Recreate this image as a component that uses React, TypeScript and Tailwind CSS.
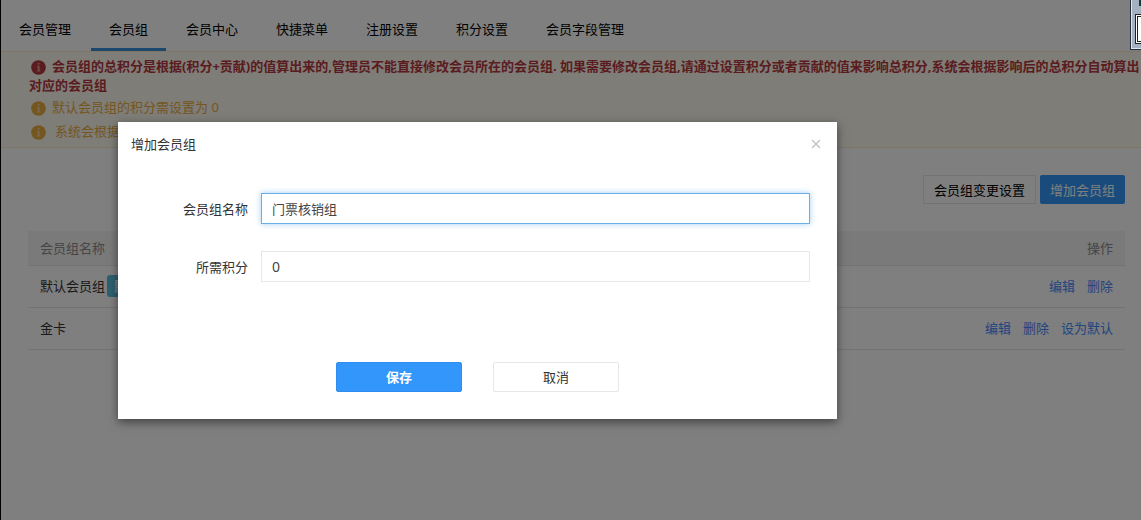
import { useEffect, useRef, useState } from "react";
import type { ReactNode } from "react";

const TABS = ["会员管理", "会员组", "会员中心", "快捷菜单", "注册设置", "积分设置", "会员字段管理"];

interface Group {
  name: string;
  isDefault?: boolean;
  actions: string[];
}

const GROUPS: Group[] = [
  { name: "默认会员组", isDefault: true, actions: ["编辑", "删除"] },
  { name: "金卡", actions: ["编辑", "删除", "设为默认"] },
];

function InfoIcon({ className }: { className: string }) {
  return (
    <svg viewBox="0 0 15 15" className={`inline-block size-[15px] shrink-0 ${className}`} aria-hidden="true">
      <circle cx="7.5" cy="7.5" r="7.3" fill="currentColor" />
      <path d="M6.7 3h1.9v1.6H6.7zM6 5.8h2.6v4.6h.9v1.2H5.8v-1.2h.9V7H6z" fill="#fffaf0" fillOpacity="0.5" />
    </svg>
  );
}

function Field({ id, label, children }: { id: string; label: string; children: ReactNode }) {
  return (
    <div className="flex items-center">
      <label htmlFor={id} className="w-[130px] shrink-0 pr-[13px] text-right">
        {label}
      </label>
      {children}
    </div>
  );
}

function Tabs() {
  return (
    <nav className="flex h-[51px] items-end gap-[2px] text-black">
      {TABS.map((tab) => (
        <a
          key={tab}
          href="#"
          className={`flex h-[41px] items-center justify-center border-b-[3px] px-[18px] whitespace-nowrap ${
            tab === "会员组" ? "border-[#3a90dc]" : "border-transparent"
          }`}
        >
          {tab}
        </a>
      ))}
    </nav>
  );
}

function Notice() {
  return (
    <div className="border-y border-[#faebcc] bg-[#fffaf0] pb-1 pl-7 text-[#e8ad40]">
      <p className="pt-[5px] leading-[19px] font-bold text-[#b4383c]">
        <InfoIcon className="mr-[6px] ml-[2px] align-[-4px]" />
        会员组的总积分是根据(积分+贡献)的值算出来的,管理员不能直接修改会员所在的会员组. 如果需要修改会员组,请通过设置积分或者贡献的值来影响总积分,系统会根据影响后的总积分自动算出对应的会员组
      </p>
      <p className="leading-6">
        <InfoIcon className="mr-[6px] ml-[2px] align-[-4px]" />
        默认会员组的积分需设置为 0
      </p>
      <p className="leading-6">
        <InfoIcon className="mr-[9px] ml-[2px] align-[-4px]" />
        系统会根据
      </p>
    </div>
  );
}

function GroupTable() {
  return (
    <table className="mt-[27px] w-full border-collapse">
      <thead>
        <tr className="h-[34px] border-b border-[#e7e7eb] bg-[#f4f5f5] text-[#8d8d8d]">
          <th className="px-3 text-left font-normal">会员组名称</th>
          <th className="px-3 text-right font-normal">操作</th>
        </tr>
      </thead>
      <tbody>
        {GROUPS.map((g) => (
          <tr key={g.name} className="h-[42px] border-b border-[#e7e7eb]">
            <td className="px-3">
              <div className="flex items-center gap-[2px]">
                {g.name}
                {g.isDefault && <span className="rounded-[3px] bg-[#5bc0de] px-[7px] leading-[22px] font-bold text-white">默认</span>}
              </div>
            </td>
            <td className="px-3">
              <div className="flex justify-end gap-3 text-[#428bff]">
                {g.actions.map((a) => (
                  <a key={a} href="#">
                    {a}
                  </a>
                ))}
              </div>
            </td>
          </tr>
        ))}
      </tbody>
    </table>
  );
}

function AddGroupDialog() {
  const [name, setName] = useState("门票核销组");
  const [points, setPoints] = useState("0");
  const nameRef = useRef<HTMLInputElement>(null);

  useEffect(() => {
    const el = nameRef.current;
    el?.focus();
    el?.setSelectionRange(el.value.length, el.value.length);
  }, []);

  return (
    <div
      role="dialog"
      aria-label="增加会员组"
      className="w-full max-w-[719px] bg-white shadow-[0_3px_9px_rgba(0,0,0,0.5)]"
    >
      <div className="flex h-[43px] items-center justify-between px-[13px]">
        <h2>增加会员组</h2>
        <button type="button" aria-label="关闭" className="p-[3px] text-[#c4c4c4]">
          <svg viewBox="0 0 10 10" className="size-[10px]" stroke="currentColor" strokeWidth="1.5">
            <path d="M1 1l8 8M9 1L1 9" />
          </svg>
        </button>
      </div>
      <form className="flex flex-col gap-[27px] pt-7 pr-[27px] pb-[27px] pl-[13px]">
        <Field id="group-name" label="会员组名称">
          <input
            id="group-name"
            ref={nameRef}
            value={name}
            onChange={(e) => setName(e.target.value)}
            className="h-[31px] min-w-0 flex-1 border border-[#e7e7eb] px-[10px] text-[#444] outline-none focus:border-[#66afe9] focus:shadow-[0_0_6px_rgba(102,175,233,0.6)]"
          />
        </Field>
        <Field id="group-points" label="所需积分">
          <input
            id="group-points"
            value={points}
            onChange={(e) => setPoints(e.target.value)}
            className="h-[31px] min-w-0 flex-1 border border-[#e7e7eb] px-[10px] text-sm text-[#444] outline-none"
          />
        </Field>
        <div className="flex justify-center gap-[31px] pt-[53px] pl-[14px]">
          <button type="button" className="h-[30px] w-[126px] rounded-[2px] border border-[#2f8df0] bg-[#3296fa] font-bold text-white">
            保存
          </button>
          <button type="button" className="h-[30px] w-[126px] rounded-[2px] border border-[#e7e7eb]">
            取消
          </button>
        </div>
      </form>
    </div>
  );
}

export default function App() {
  return (
    <div className="relative min-h-screen overflow-hidden border-l border-black bg-white font-['Noto_Sans','Noto_Sans_CJK_SC',sans-serif] text-[13px] leading-5 text-[#333]">
      <Tabs />
      <Notice />
      <main className="pt-[27px] pr-4 pl-[27px]">
        <div className="flex justify-end gap-1 text-black">
          <button type="button" className="h-[29px] border border-[#e7e7eb] px-[10px]">
            会员组变更设置
          </button>
          <button type="button" className="h-[29px] rounded-[2px] bg-[#3296fa] px-[10px] text-white">
            增加会员组
          </button>
        </div>
        <GroupTable />
      </main>

      <div className="absolute inset-0 bg-black/50 pt-[122px] pr-4 pl-[117px]">
        <AddGroupDialog />
      </div>

      {/* corner of a floating window */}
      <div className="absolute top-0 right-0 h-[50px] w-[11px] overflow-hidden border-b border-l border-[#26303c] bg-[#a3b1c0]">
        <div className="h-full w-full border-b border-l border-[#dfe6ee] pl-[3px]">
          <div className="ml-1 h-[6px] w-1 bg-[#143c40]" />
          <div className="mt-[8px] h-[30px] w-5 border border-[#222] bg-white p-px">
            <div className="h-full w-full border border-[#222]" />
          </div>
        </div>
      </div>
    </div>
  );
}
